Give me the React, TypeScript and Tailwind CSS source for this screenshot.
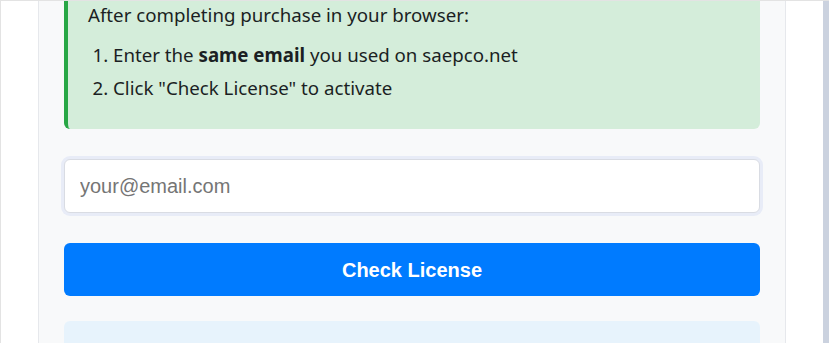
import React from 'react';

const App: React.FC = () => {
  return (
    <div className="relative flex h-[343px] w-[829px] overflow-hidden border-t border-l border-[#e3e3e3] bg-white">
      {/* Main column */}
      <div className="ml-[37px] flex w-[748px] flex-col border-x border-[#e6e8ec] bg-[#f8f9fa] px-[25px]">
        {/* Success notice (scrolled, top cut off) */}
        <div
          className="shrink-0 rounded-b-[6px] border-l-4 border-[#28a745] bg-[#d4edda] pb-[28px] pl-[20px] pr-[20px] text-[18.7px] text-[#1b1f23]"
          style={{ fontFamily: '"Noto Sans", "Open Sans", sans-serif' }}
        >
          <p className="leading-[27px]">After completing purchase in your browser:</p>
          <ol className="mt-[13px] list-decimal pl-[25px] leading-[27px]">
            <li className="mb-[6px]">
              Enter the <strong className="font-bold">same email</strong> you used on saepco.net
            </li>
            <li>Click "Check License" to activate</li>
          </ol>
        </div>

        {/* Email input */}
        <input
          type="email"
          placeholder="your@email.com"
          className="mt-[30px] h-[54px] w-full shrink-0 rounded-[6px] border border-[#d9dce3] bg-white px-[15px] text-[20px] text-[#333] outline-none shadow-[0_0_0_3px_#e8ecf7] placeholder:text-[#757575]"
          style={{ fontFamily: '"Liberation Sans", Arial, sans-serif' }}
        />

        {/* Action */}
        <button
          className="mt-[30px] h-[53px] w-full shrink-0 rounded-[6px] bg-[#007bff] text-[20px] font-bold text-white"
          style={{ fontFamily: '"Liberation Sans", Arial, sans-serif' }}
        >
          Check License
        </button>

        {/* Info box (cut off at bottom) */}
        <div className="mt-[25px] h-[80px] shrink-0 rounded-[6px] bg-[#e7f3fc]" />
      </div>

      {/* Scrollbar track */}
      <div className="absolute right-0 top-0 h-full w-[6px] bg-[#cbd2df]" />
    </div>
  );
};

export default App;
